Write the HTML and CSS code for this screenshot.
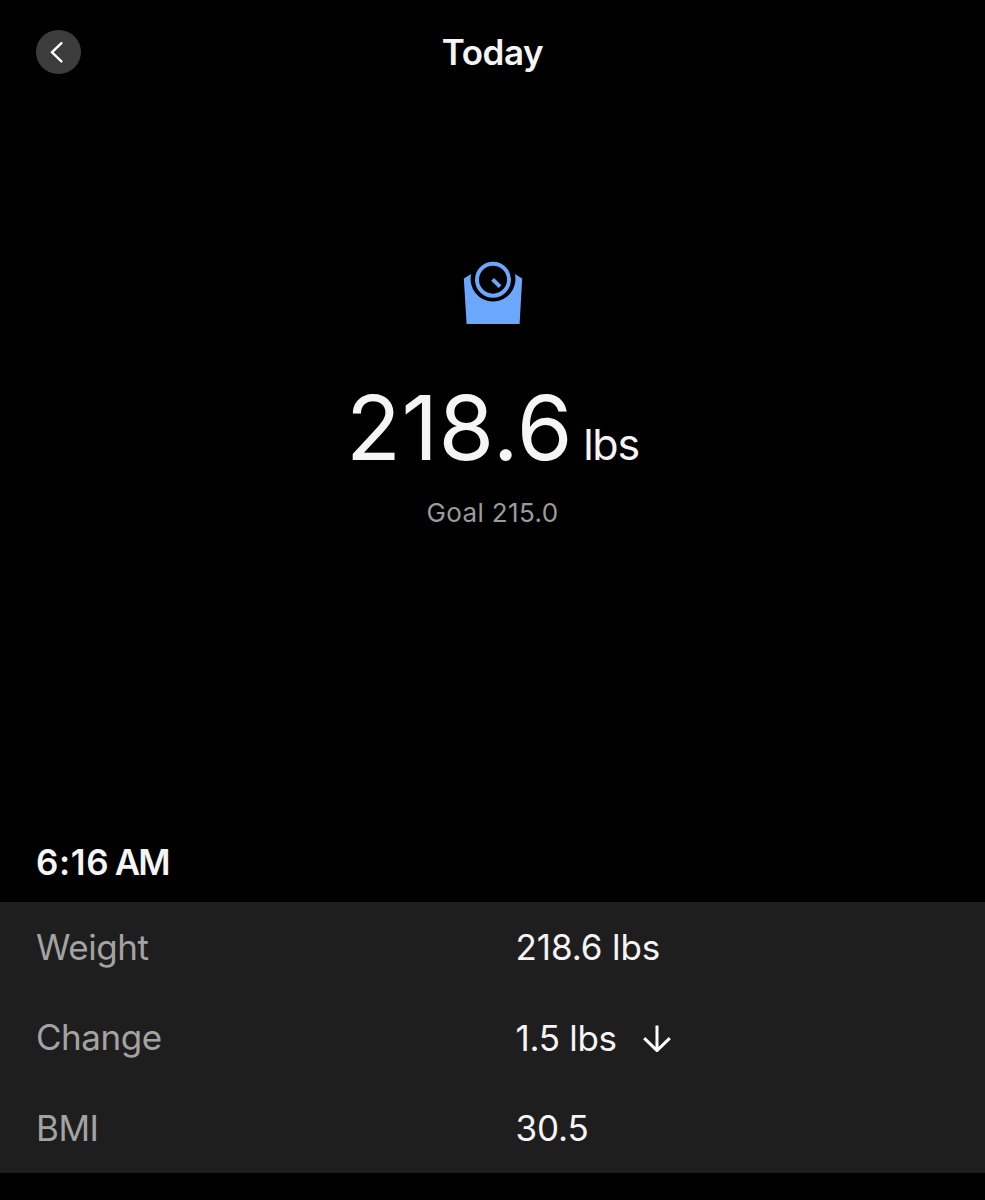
FILE: index.html
```html
<!DOCTYPE html>
<html lang="en">
<head>
  <meta charset="utf-8" />
  <meta name="viewport" content="width=device-width, initial-scale=1" />
  <title>Today</title>
  <link rel="stylesheet" href="styles.css">
</head>
<body>
  <header class="topbar">
    <button type="button" class="back" aria-label="Back">
      <svg width="45" height="45" viewBox="0 0 45 45">
        <path d="M25.4 13.2 L16 22.3 L25.4 31.4" fill="none" stroke="currentColor" stroke-width="2.4" stroke-linecap="round" />
      </svg>
    </button>
    <h1><span class="title">Today</span></h1>
  </header>

  <main>
    <section class="summary">
      <!-- Bathroom scale -->
      <svg class="scale-icon" width="60" height="64" viewBox="0 0 60 64">
        <path class="scale-body" d="M0.8 17.5 L8.2 13 A22.4 22.4 0 1 0 51.8 13 L59.2 17.5 L56.6 62.9 H3.6 Z" />
        <circle class="scale-line" cx="30" cy="18.7" r="16" />
        <path class="scale-line" d="M29.6 18.4 L37 25.6" />
      </svg>

      <div class="reading">
        <span class="value">218.6</span>
        <span class="unit">lbs</span>
      </div>
      <p class="goal">Goal 215.0</p>
    </section>

    <section class="entry">
      <h2><span class="time">6:16</span><span class="ampm">AM</span></h2>
      <dl class="details">
        <div class="row">
          <dt class="weight-label">Weight</dt>
          <dd><span class="weight">218.6 lbs</span></dd>
        </div>
        <div class="row">
          <dt class="change-label">Change</dt>
          <dd class="delta">
            <span class="change">1.5 lbs</span>
            <svg class="arrow" width="28" height="28" viewBox="0 0 28 28">
              <path d="M14 1.5 V27 M1.2 14.2 L14 26.6 L26.8 14.2" />
            </svg>
          </dd>
        </div>
        <div class="row">
          <dt class="bmi-label">BMI</dt>
          <dd><span class="bmi">30.5</span></dd>
        </div>
      </dl>
    </section>
  </main>
</body>
</html>
```
FILE: styles.css
```css
html, body {
  margin: 0;
  padding: 0;
}

body {
  background: #000;
  color: #f5f5f5;
  font-family: Inter, "Liberation Sans", sans-serif;
  font-size: 35px;
  overflow: hidden;
}

h1, h2, p, dl, dd {
  margin: 0;
}

svg {
  display: block;
}

/* Back button on the left, title centered across the full width */
.topbar {
  display: grid;
  grid-template-columns: 45px 1fr 45px;
  align-items: center;
  height: 104px;
  padding: 0 36px;
}

.back {
  width: 44.5px;
  height: 44.5px;
  padding: 0;
  border: none;
  border-radius: 50%;
  background: #3c3c3c;
  color: #fff;
  cursor: pointer;
}

h1 {
  font-size: 35px;
  font-weight: 600;
  line-height: 44px;
  letter-spacing: -0.4px;
  text-align: center;
}

.summary {
  display: flex;
  flex-direction: column;
  align-items: center;
  height: 577px;
  padding-top: 157px;
}

.scale-body {
  fill: #6ba7fb;
}

.scale-line {
  fill: none;
  stroke: #6ba7fb;
  stroke-width: 4;
}

.reading {
  display: flex;
  align-items: baseline;
  gap: 10px;
  margin-top: 48px;
  line-height: 109px;
}

.value {
  font-size: 90px;
  letter-spacing: 0.5px;
}

.unit {
  font-size: 43px;
  letter-spacing: -1.2px;
}

.goal {
  margin-top: -2px;
  color: #9b9b9b;
  font-size: 26px;
  line-height: 32px;
  letter-spacing: 0.4px;
}

.entry h2 {
  display: flex;
  gap: 5.5px;
  padding: 2px 36px 18px;
  font-size: 35px;
  font-weight: 600;
  line-height: 44px;
}

.time {
  letter-spacing: 0.6px;
}

.ampm {
  letter-spacing: -1.8px;
}

.details {
  padding-bottom: 0.5px;
  background: #1e1e1e;
}

.row {
  display: grid;
  grid-template-columns: 479.5px 1fr;
  align-items: center;
  height: 90.16px;
  padding: 0 36px;
}

.row:last-child {
  padding-top: 1px;
  height: 89.16px;
}

dt {
  color: #a3a3a3;
  letter-spacing: -0.45px;
}

dd {
  display: flex;
  align-items: center;
  gap: 26px;
  letter-spacing: -0.1px;
}

.delta {
  padding-top: 2px;
  letter-spacing: -0.3px;
}

.arrow path {
  fill: none;
  stroke: #fff;
  stroke-width: 3;
}
```
